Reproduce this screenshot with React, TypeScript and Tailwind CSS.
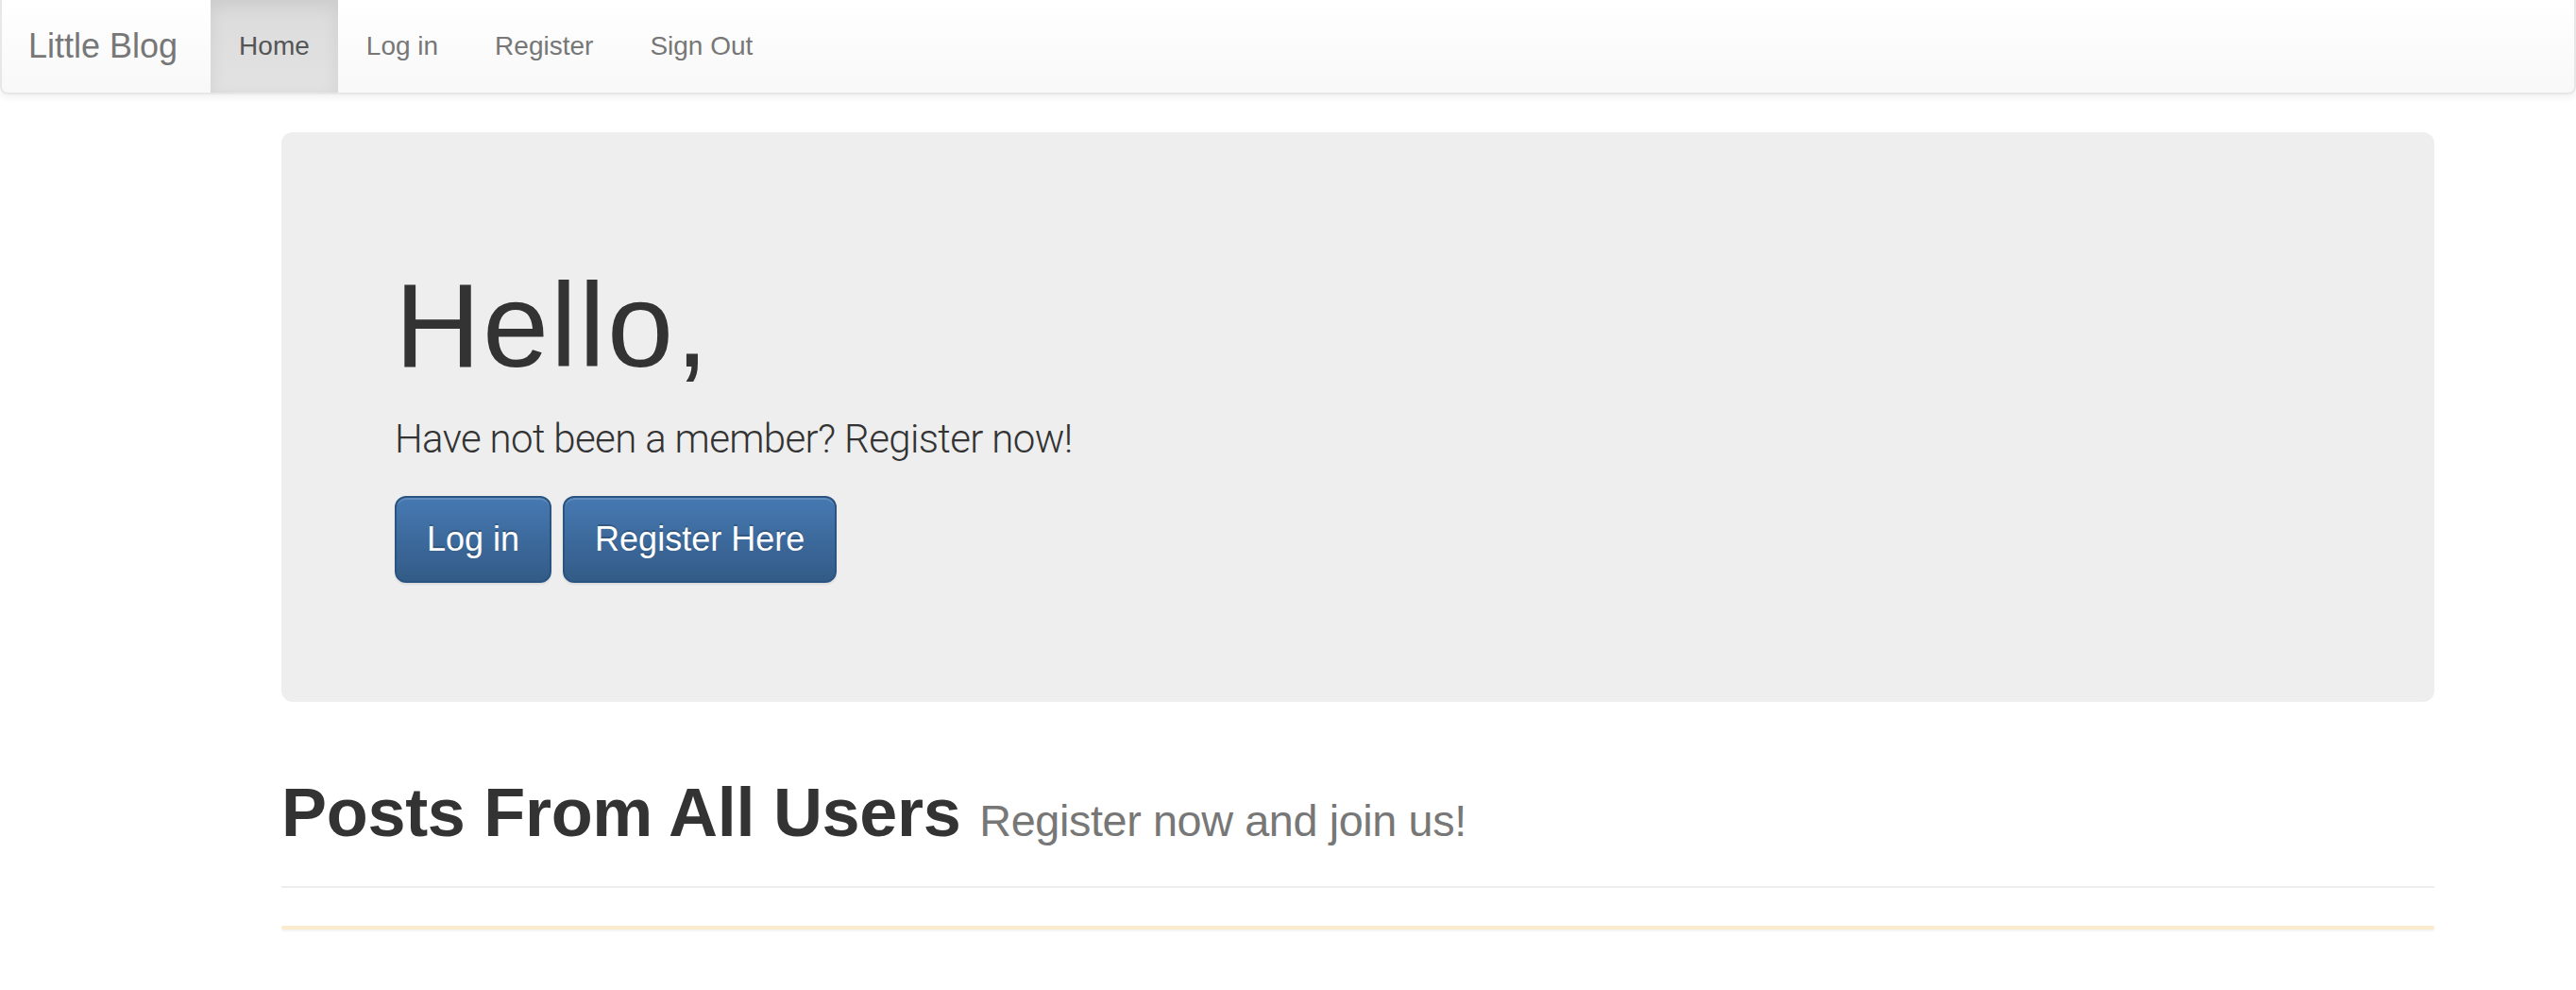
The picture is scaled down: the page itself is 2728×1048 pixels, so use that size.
import React from "react";

const navItems = [
  { label: "Home", active: true },
  { label: "Log in", active: false },
  { label: "Register", active: false },
  { label: "Sign Out", active: false },
];

function Navbar() {
  return (
    <nav className="flex h-[100px] items-stretch rounded-b-[8px] border-x-2 border-b-2 border-[#e7e7e7] bg-gradient-to-b from-white to-[#f8f8f8] shadow-[0_2px_10px_rgba(0,0,0,0.075)]">
      <a className="flex items-center pl-[28px] pr-[35px] text-[36px] leading-[40px] text-[#777] [text-shadow:0_2px_0_rgba(255,255,255,0.25)]">
        Little Blog
      </a>
      <ul className="flex items-stretch">
        {navItems.map((item) => (
          <li key={item.label} className="flex">
            <a
              className={`flex items-center px-[30px] text-[28px] leading-[40px] ${
                item.active
                  ? "bg-gradient-to-b from-[#dbdbdb] to-[#e2e2e2] text-[#555] shadow-[inset_0_6px_18px_rgba(0,0,0,0.075)]"
                  : "text-[#777]"
              }`}
            >
              {item.label}
            </a>
          </li>
        ))}
      </ul>
    </nav>
  );
}

function Jumbotron() {
  return (
    <div className="rounded-[12px] bg-[#eee] px-[120px] py-[96px]">
      <h1 className="mt-[40px] mb-[20px] text-[126px] font-medium leading-[1.1] tracking-[2px] text-[#333]">
        Hello,
      </h1>
      <p className="mb-[30px] font-['Roboto',sans-serif] text-[42px] font-light leading-[60px] tracking-[-0.65px] text-[#333]">
        Have not been a member? Register now!
      </p>
      <div className="mb-[30px] flex gap-[12px]">
        <button className="rounded-[12px] border-2 border-[#2b5480] bg-gradient-to-b from-[#4679b2] to-[#335b87] px-[32px] py-[20px] text-[36px] leading-[48px] text-white shadow-[inset_0_2px_0_rgba(255,255,255,0.15),0_2px_2px_rgba(0,0,0,0.075)] [text-shadow:0_-2px_0_rgba(0,0,0,0.2)]">
          Log in
        </button>
        <button className="rounded-[12px] border-2 border-[#2b5480] bg-gradient-to-b from-[#4679b2] to-[#335b87] px-[32px] py-[20px] text-[36px] leading-[48px] text-white shadow-[inset_0_2px_0_rgba(255,255,255,0.15),0_2px_2px_rgba(0,0,0,0.075)] [text-shadow:0_-2px_0_rgba(0,0,0,0.2)]">
          Register Here
        </button>
      </div>
    </div>
  );
}

export default function App() {
  return (
    <div className="min-h-[1048px] bg-white font-['Liberation_Sans',Arial,sans-serif] text-[#333]">
      <Navbar />
      <div className="ml-[268px] w-[2340px] px-[30px] pt-[40px]">
        <Jumbotron />
        {/* Posts header */}
        <div className="mt-[78px] border-b-2 border-[#eee] pb-[18px]">
          <h1 className="mb-[20px] text-[72px] font-bold leading-[1.1] tracking-[-0.3px] text-[#333]">
            Posts From All Users{" "}
            <small className="text-[46.8px] font-normal tracking-[-0.4px] text-[#777]">
              Register now and join us!
            </small>
          </h1>
        </div>
        <div className="mt-[40px] h-[4px] rounded-[8px] border-2 border-[#faebcc] shadow-[0_2px_2px_rgba(0,0,0,0.05)]" />
      </div>
    </div>
  );
}
